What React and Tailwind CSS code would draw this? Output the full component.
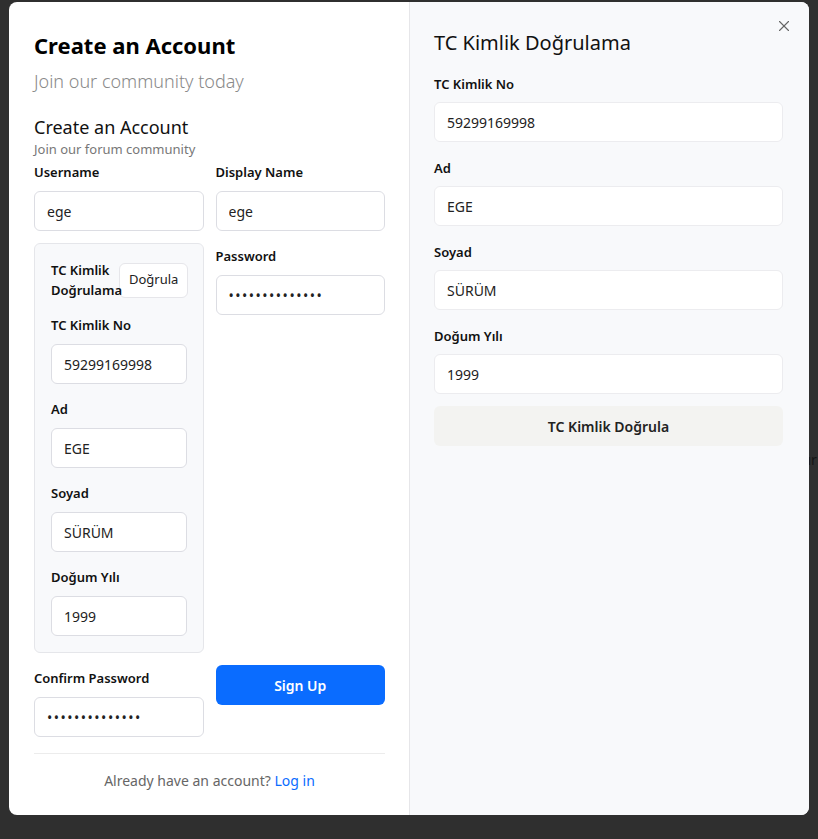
import { X } from "lucide-react";

const font = { fontFamily: '"Noto Sans", "Open Sans", sans-serif' };

function Field({ label, value, type = "text", className = "" }) {
  return (
    <div className={className}>
      <label className="block pt-1 pb-[9px] text-[13px] font-semibold leading-5 text-[#111]">{label}</label>
      <input
        type={type}
        readOnly
        value={value}
        className={`h-10 w-full rounded-md border border-[#dcdde3] bg-white px-3 text-[14px] text-[#222] outline-none ${
          type === "password" ? "tracking-[1.5px]" : ""
        }`}
      />
    </div>
  );
}

function SideField({ label, value }) {
  return (
    <div>
      <label className="mb-2 block text-[13px] font-semibold leading-5 text-[#111]">{label}</label>
      <input
        type="text"
        readOnly
        value={value}
        className="h-10 w-full rounded-md border border-[#ececef] bg-white px-3 text-[14px] text-[#222] outline-none"
      />
    </div>
  );
}

export default function App() {
  return (
    <div className="relative h-[839px] w-[818px] overflow-hidden bg-[#2f2f2f]" style={font}>
      {/* text of the page behind the modal */}
      <span className="absolute left-[800px] top-[449px] text-[14px] text-[#151515]">kır</span>

      <div className="relative z-10 ml-[9px] mt-[2px] flex w-[800px] overflow-hidden rounded-lg bg-white">
        {/* left: sign up form */}
        <div className="w-[401px] border-r border-[#e6e6e9] pb-6 pl-[25px] pr-6 pt-7">
          <h1 className="text-[22px] font-bold leading-[30px] text-black">Create an Account</h1>
          <p className="mt-2 text-[18px] font-light leading-[26px] text-[#8a8a8a]">Join our community today</p>

          <h2 className="mt-5 text-[18px] leading-[26px] text-[#111]">Create an Account</h2>
          <p className="text-[13px] leading-[18px] text-[#777]">Join our forum community</p>

          <div className="grid grid-cols-2 items-start gap-3">
            <Field label="Username" value="ege" />
            <Field label="Display Name" value="ege" />

            <div className="flex flex-col gap-[11px] rounded-md border border-[#e5e6ea] bg-[#f8f9fb] p-4">
              <div className="flex items-center justify-between">
                <span className="relative z-10 w-[68px] text-[13px] font-semibold leading-5 text-[#111]">
                  TC Kimlik Doğrulama
                </span>
                <button
                  type="button"
                  className="h-[35px] rounded-md border border-[#e6e6ea] bg-white px-[9px] text-[13px] text-[#222]"
                >
                  Doğrula
                </button>
              </div>
              <Field label="TC Kimlik No" value="59299169998" />
              <Field label="Ad" value="EGE" />
              <Field label="Soyad" value="SÜRÜM" />
              <Field label="Doğum Yılı" value="1999" />
            </div>
            <Field label="Password" value="abcdefghijklmn" type="password" className="-mt-px" />

            <Field label="Confirm Password" value="abcdefghijklmn" type="password" className="-mt-px" />
            <button type="button" className="h-10 rounded-md bg-[#0a6cff] text-[14px] font-semibold text-white">
              Sign Up
            </button>
          </div>

          <div className="mt-4 border-t border-[#ececec] pt-[17px] text-center text-[14px] leading-5 text-[#666]">
            Already have an account? <a className="text-[#0a6cff]">Log in</a>
          </div>
        </div>

        {/* right: TC kimlik panel */}
        <div className="relative flex-1 bg-[#f8f9fb] pl-6 pr-[26px] pt-[27px]">
          <button type="button" className="absolute right-[16px] top-[15px] text-[#666]" aria-label="Close">
            <X size={18} strokeWidth={1.5} />
          </button>
          <h3 className="text-[20px] leading-7 text-[#111]">TC Kimlik Doğrulama</h3>
          <div className="mt-[17px] flex flex-col gap-4">
            <SideField label="TC Kimlik No" value="59299169998" />
            <SideField label="Ad" value="EGE" />
            <SideField label="Soyad" value="SÜRÜM" />
            <SideField label="Doğum Yılı" value="1999" />
          </div>
          <button
            type="button"
            className="mt-3 h-10 w-full rounded-md bg-[#f3f3f1] text-[14px] font-semibold text-[#222]"
          >
            TC Kimlik Doğrula
          </button>
        </div>
      </div>
    </div>
  );
}
